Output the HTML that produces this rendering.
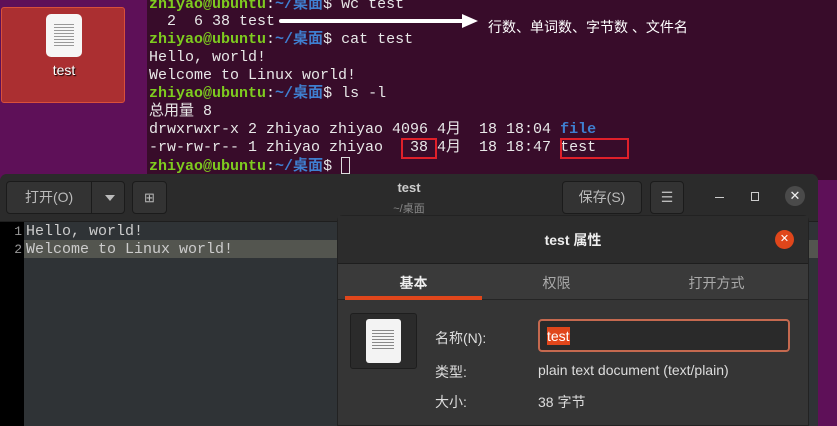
<!DOCTYPE html>
<html><head><meta charset="utf-8"><style>
*{margin:0;padding:0;box-sizing:border-box}
body{width:837px;height:426px;overflow:hidden;background:#5e1058;position:relative;font-family:"Liberation Sans","Noto Sans CJK SC",sans-serif}
.term{position:absolute;left:147px;top:0;width:690px;height:180px;background:#380c2a;font-family:"Liberation Mono","Noto Sans CJK SC",monospace;font-size:15px;color:#e8e8e8}
.ln{position:absolute;left:2px;white-space:pre;height:18px;line-height:18px}
.g{color:#7ecb1f;font-weight:bold}.b{color:#3f7fd0;font-weight:bold}
.box{position:absolute;border:2px solid #e0202a}
.desk{position:absolute;left:1px;top:7px;width:124px;height:96px;background:rgba(190,55,40,.8);border:1px solid #d8503a;border-radius:3px}
.ed{position:absolute;left:0;top:174px;width:818px;height:252px;background:#2f3336;border-radius:7px 7px 0 0}
.hb{position:absolute;left:0;top:0;width:818px;height:48px;background:#2b2b2b;border-radius:7px 7px 0 0;border-bottom:1px solid #1e1e1e}
.btn{position:absolute;top:7px;height:33px;border:1px solid #1b1b1b;border-radius:4px;background:#333;color:#bbb;font-size:14px;line-height:31px;text-align:center}
.dlg{position:absolute;left:337px;top:215px;width:472px;height:211px;background:#353535;border-radius:6px 6px 0 0;border:1px solid #222}
</style></head><body>
<div class="desk">
 <div style="position:absolute;left:44px;top:6px;width:36px;height:43px;background:#f6f6f6;border-radius:5px"></div>
 <div style="position:absolute;left:52px;top:16px;width:20px;height:22px;background:repeating-linear-gradient(#999 0 1px,transparent 1px 3px)"></div>
 <div style="position:absolute;left:0;width:124px;top:54px;text-align:center;color:#fff;font-size:14px;text-shadow:1px 1px 1px #000">test</div>
</div>
<div class="term">
 <div class="ln" style="top:-4px"><span class="g">zhiyao@ubuntu</span>:<span class="b">~/桌面</span>$ wc test</div>
 <div class="ln" style="top:13px">  2  6 38 test</div>
 <div class="ln" style="top:31px"><span class="g">zhiyao@ubuntu</span>:<span class="b">~/桌面</span>$ cat test</div>
 <div class="ln" style="top:49px">Hello, world!</div>
 <div class="ln" style="top:67px">Welcome to Linux world!</div>
 <div class="ln" style="top:85px"><span class="g">zhiyao@ubuntu</span>:<span class="b">~/桌面</span>$ ls -l</div>
 <div class="ln" style="top:103px">总用量 8</div>
 <div class="ln" style="top:121px">drwxrwxr-x 2 zhiyao zhiyao 4096 4月  18 18:04 <span class="b">file</span></div>
 <div class="ln" style="top:139px">-rw-rw-r-- 1 zhiyao zhiyao   38 4月  18 18:47 test</div>
 <div class="ln" style="top:157px"><span class="g">zhiyao@ubuntu</span>:<span class="b">~/桌面</span>$ <span style="display:inline-block;width:9px;height:17px;border:1px solid #ddd;vertical-align:-4px"></span></div>
 <div style="position:absolute;left:132px;top:19px;width:190px;height:4px;background:#fff;border-radius:2px"></div>
 <div style="position:absolute;left:315px;top:14px;width:0;height:0;border-left:16px solid #fff;border-top:7px solid transparent;border-bottom:7px solid transparent"></div>
 <div style="position:absolute;left:341px;top:17px;font-family:'Liberation Sans','Noto Sans CJK SC',sans-serif;font-size:14px;color:#fff">行数、单词数、字节数 、文件名</div>
 <div class="box" style="left:254px;top:138px;width:36px;height:21px"></div>
 <div class="box" style="left:413px;top:138px;width:69px;height:21px"></div>
</div>
<div class="ed">
 <div class="hb">
  <div class="btn" style="left:6px;width:119px;text-align:left;padding-left:18px">打开(O)<span style="position:absolute;left:84px;top:0;height:31px;border-left:1px solid #1b1b1b"></span><span style="position:absolute;left:98px;top:13px;border-top:6px solid #bbb;border-left:5px solid transparent;border-right:5px solid transparent"></span></div>
  <div class="btn" style="left:132px;width:35px;font-size:13px">⊞</div>
  <div style="position:absolute;left:0;width:818px;top:6px;text-align:center;color:#ccc;font-size:13px;font-weight:bold">test</div>
  <div style="position:absolute;left:0;width:818px;top:26px;text-align:center;color:#888;font-size:11px">~/桌面</div>
  <div class="btn" style="left:562px;width:80px">保存(S)</div>
  <div class="btn" style="left:650px;width:34px">☰</div>
  <div style="position:absolute;left:715px;top:23px;width:9px;height:1px;background:#ccc"></div>
  <div style="position:absolute;left:751px;top:18px;width:8px;height:9px;border:1px solid #ccc"></div>
  <div style="position:absolute;left:785px;top:12px;width:20px;height:20px;border-radius:50%;background:#4a4a4a;color:#eee;font-size:13px;text-align:center;line-height:20px">✕</div>
 </div>
 <div style="position:absolute;left:0;top:48px;width:24px;height:204px;background:#000"></div>
 <div style="position:absolute;left:24px;top:66px;width:794px;height:18px;background:#53554f"></div>
 <div style="position:absolute;left:0;top:49px;width:22px;text-align:right;font-family:'Liberation Mono',monospace;font-size:13px;line-height:18px;color:#999;white-space:pre">1
2</div>
 <div style="position:absolute;left:26px;top:49px;font-family:'Liberation Mono',monospace;font-size:15px;line-height:18px;color:#ccc;white-space:pre">Hello, world!
Welcome to Linux world!</div>
</div>
<div class="dlg">
 <div style="height:48px;background:#2c2c2c;border-bottom:1px solid #1e1e1e;text-align:center;line-height:48px;color:#eee;font-size:14px;font-weight:bold">test 属性</div>
 <div style="position:absolute;left:437px;top:14px;width:19px;height:19px;border-radius:50%;background:#e0461b;color:#fff;font-size:11px;text-align:center;line-height:19px">✕</div>
 <div style="position:absolute;top:48px;left:0;width:470px;height:36px;background:#3a3a3a;border-bottom:1px solid #252525"></div>
 <div style="position:absolute;top:57px;left:7px;width:137px;text-align:center;color:#eee;font-size:14px;font-weight:bold">基本</div>
 <div style="position:absolute;top:57px;left:150px;width:137px;text-align:center;color:#aaa;font-size:14px">权限</div>
 <div style="position:absolute;top:57px;left:310px;width:137px;text-align:center;color:#aaa;font-size:14px">打开方式</div>
 <div style="position:absolute;top:80px;left:7px;width:137px;height:4px;background:#e0461b"></div>
 <div style="position:absolute;left:12px;top:97px;width:67px;height:56px;background:#2b2b2b;border:1px solid #1e1e1e;border-radius:3px"></div>
 <div style="position:absolute;left:28px;top:103px;width:35px;height:44px;background:#f3f3f3;border-radius:3px"></div>
 <div style="position:absolute;left:34px;top:114px;width:22px;height:21px;background:repeating-linear-gradient(#888 0 1px,transparent 1px 3px)"></div>
 <div style="position:absolute;left:97px;top:112px;color:#ddd;font-size:14px">名称(N):</div>
 <div style="position:absolute;left:200px;top:103px;width:252px;height:33px;border:2px solid #c5694f;border-radius:4px;background:#2a2a2a"><span style="position:absolute;left:7px;top:6px;background:#e0461b;color:#fff;font-size:14px;line-height:18px">test</span></div>
 <div style="position:absolute;left:97px;top:146px;color:#ddd;font-size:14px">类型:</div>
 <div style="position:absolute;left:200px;top:146px;color:#ddd;font-size:14px">plain text document (text/plain)</div>
 <div style="position:absolute;left:97px;top:176px;color:#ddd;font-size:14px">大小:</div>
 <div style="position:absolute;left:200px;top:176px;color:#ddd;font-size:14px">38 字节</div>
</div>
</body></html>
